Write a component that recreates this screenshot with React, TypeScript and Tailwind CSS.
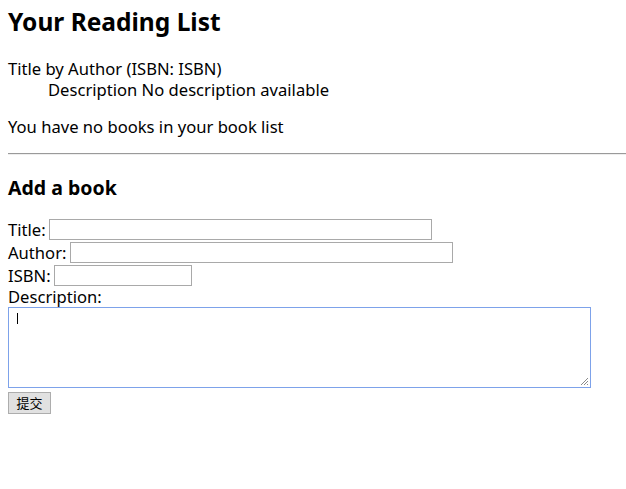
import React from "react";

export default function App() {
  return (
    <div
      className="bg-white text-black px-2 min-h-[489px]"
      style={{ fontFamily: '"Noto Sans", "Noto Sans CJK SC", sans-serif' }}
    >
      <h1 className="text-[24.5px] font-bold leading-[32px] pt-[6px] mb-[20px]">Your Reading List</h1>
      <dl className="text-[16.6px] leading-[21px]">
        <dt>Title by Author (ISBN: ISBN)</dt>
        <dd className="ml-10">Description No description available</dd>
      </dl>
      <p className="text-[16.6px] leading-[21px] mt-4">You have no books in your book list</p>
      <div className="mt-4 -mr-2 border-t border-[#9a9a9a] border-b border-b-[#eeeeee] h-[2px]" />
      <h3 className="text-[19.5px] font-bold leading-[25px] mt-[20px] mb-[18px]">Add a book</h3>
      <form className="text-[16.6px] leading-[21px]">
        <div className="flex items-center h-[23px]">
          <span>Title:</span>
          <input className="ml-[3px] w-[383px] h-[21px] border border-[#a9a9a9] outline-none" />
        </div>
        <div className="flex items-center h-[23px]">
          <span>Author:</span>
          <input className="ml-[4px] w-[383px] h-[21px] border border-[#a9a9a9] outline-none" />
        </div>
        <div className="flex items-center h-[23px]">
          <span>ISBN:</span>
          <input className="ml-[3px] w-[138px] h-[21px] border border-[#a9a9a9] outline-none" />
        </div>
        <div className="h-[20px] leading-[20px]">Description:</div>
        <div className="relative w-[583px] h-[81px] border border-[#7da2ea]">
          <span className="absolute left-[8px] top-[5px] w-px h-[11px] bg-black" />
          <svg className="absolute right-[1px] bottom-[1px]" width="9" height="9" viewBox="0 0 9 9">
            <path d="M8 1 L1 8 M8 4 L4 8 M8 7 L7 8" stroke="#8a8a8a" strokeWidth="1" />
          </svg>
        </div>
        <div className="mt-[3px]">
          <button
            type="button"
            className="w-[43px] h-[22px] bg-[#e1e1e1] border border-[#adadad] text-[13px] leading-[20px] text-black"
          >
            提交
          </button>
        </div>
      </form>
    </div>
  );
}
